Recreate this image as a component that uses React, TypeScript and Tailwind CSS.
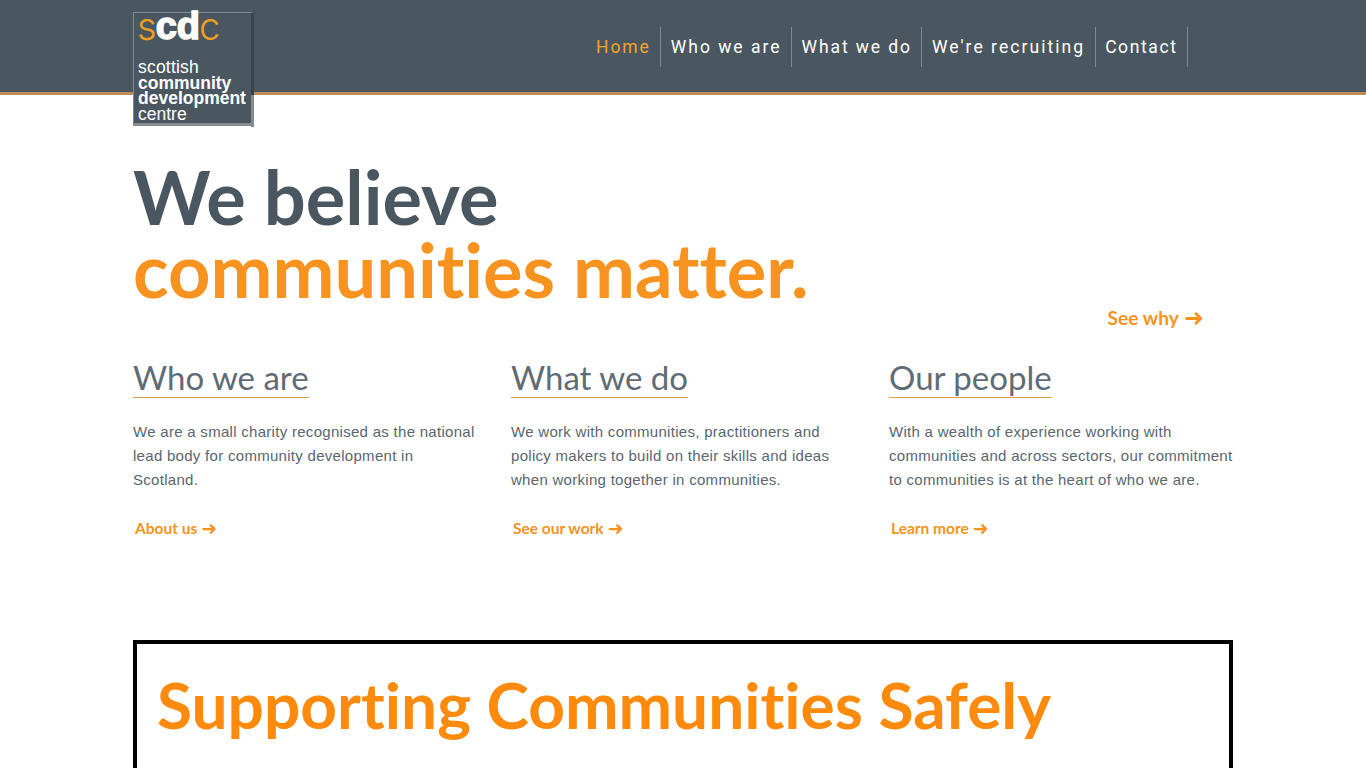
const navItems = [
  { label: 'Home', className: 'text-[#f7a030] tracking-[1.9px]' },
  { label: 'Who we are', className: 'tracking-[2px]' },
  { label: 'What we do', className: 'tracking-[1.9px]' },
  { label: "We're recruiting", className: 'tracking-[2.05px]' },
  { label: 'Contact', className: 'tracking-[1.6px]' },
]

const columns = [
  {
    title: 'Who we are',
    lines: ['We are a small charity recognised as the national', 'lead body for community development in', 'Scotland.'],
    link: 'About us',
  },
  {
    title: 'What we do',
    lines: ['We work with communities, practitioners and', 'policy makers to build on their skills and ideas', 'when working together in communities.'],
    link: 'See our work',
  },
  {
    title: 'Our people',
    lines: ['With a wealth of experience working with', 'communities and across sectors, our commitment', 'to communities is at the heart of who we are.'],
    link: 'Learn more',
  },
]

function Logo() {
  return (
    <div className="absolute left-0 top-[12px] z-10 h-[114px] w-[121px] border border-[#7f8a92] border-r-[3px] border-b-[3px] border-b-[#858c91] border-r-[#3a444c] bg-[#4b5760] font-['Liberation_Sans',sans-serif] text-white">
      <div className="ml-[3px] mt-[-3px] flex h-[33px] items-end text-[38px] leading-[33px]">
        <span className="font-['Inter',sans-serif] font-light text-[#f0a020]">s</span>
        <span className="ml-[-1px] font-bold [-webkit-text-stroke:1.5px_white]">c</span>
        <span className="font-bold [-webkit-text-stroke:1.5px_white]">d</span>
        <span className="ml-[-1px] font-['Inter',sans-serif] font-light text-[#f0a020]">c</span>
      </div>
      <div className="ml-[4px] mt-[17px] text-[17.5px] leading-[15.5px]">
        <div className="tracking-[0.2px]">scottish</div>
        <div className="font-bold">community</div>
        <div className="font-bold">development</div>
        <div>centre</div>
      </div>
      <span className="absolute right-[-3px] top-[82px] h-[32px] w-[3px] bg-[#858c91]" />
    </div>
  )
}

export default function App() {
  return (
    <div className="h-screen overflow-hidden bg-white font-['Lato',sans-serif] [font-variant-ligatures:none]">
      <header className="h-[95px] border-b-[3px] border-[#bd8f55] bg-[#4b5760]">
        <div className="relative mx-auto flex h-full w-[1100px] items-start justify-end">
          <Logo />
          <nav className="mr-[45px] mt-[27px] flex h-[40px] font-['Roboto',sans-serif] text-[17.5px] text-white">
            {navItems.map((item) => (
              <a key={item.label} className={`flex items-center border-r border-[#7f8a92] px-[9.5px] ${item.className}`}>
                {item.label}
              </a>
            ))}
          </nav>
        </div>
      </header>

      <main className="mx-auto w-[1100px]">
        <h1 className="mt-[65px] text-[74px] font-bold leading-[73px] text-[#4b5760]">
          We believe
          <br />
          <span className="text-[#f7931e]">communities matter.</span>
        </h1>

        <a className="mr-[29px] flex items-center justify-end gap-[5px] text-[19.2px] font-bold leading-[24px] text-[#f7931e]">
          See why <span className="font-['DejaVu_Sans',sans-serif] text-[24px] font-normal">➜</span>
        </a>

        <section className="mt-[28px] grid grid-cols-3 gap-[34px]">
          {columns.map((col) => (
            <div key={col.title}>
              <h2 className="w-fit border-b border-[#e0a050] text-[33px] font-normal leading-[39px] text-[#5f6b75]">{col.title}</h2>
              <p className="mt-[22px] font-['Liberation_Sans',sans-serif] text-[15px] leading-[24px] tracking-[0.29px] text-[#5a6670]">
                {col.lines.map((line) => (
                  <span key={line} className="block whitespace-nowrap">{line}</span>
                ))}
              </p>
              <a className="ml-[2px] mt-[24px] flex items-center gap-[4px] text-[15.5px] font-bold leading-[24px] text-[#f7931e]">
                {col.link} <span className="font-['DejaVu_Sans',sans-serif] text-[19px] font-normal">➜</span>
              </a>
            </div>
          ))}
        </section>

        <section className="mt-[100px] h-[200px] border-4 border-black px-[20px]">
          <h2 className="mt-[25px] text-[64px] font-bold leading-[72px] text-[#ff8a0c]">Supporting Communities Safely</h2>
        </section>
      </main>
    </div>
  )
}
